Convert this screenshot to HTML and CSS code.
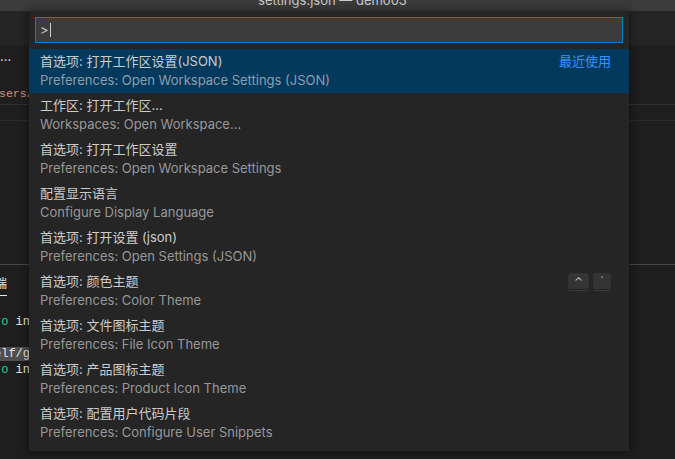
FILE: index.html
```html
<!DOCTYPE html>
<html lang="zh">
<head>
<meta charset="utf-8">
<title>settings.json — demo03</title>
<link rel="stylesheet" href="styles.css">
</head>
<body>
<div class="window">
  <div class="titlebar"><span class="title">settings.json — demo03</span></div>
  <div class="tabs"></div>
  <div class="editor">
    <div class="crumbs">…</div>
    <div class="code"><span class="str">sers/demo03/settings.json"</span></div>
    <div class="sep"></div>
    <div class="sep2"></div>
  </div>
  <div class="panel">
    <div class="ptabs"><span class="ptab">终端</span></div>
    <div class="term">
      <div class="tline"><span class="green">ro</span> install</div>
      <div class="tline"></div>
      <div class="tline"><span class="sel">elf/git</span></div>
      <div class="tline"><span class="green">ro</span> install</div>
    </div>
  </div>

  <div class="quick">
    <div class="input"><span class="prompt">&gt;</span><span class="caret"></span></div>
    <div class="list">
      <div class="row selected">
        <div class="line1"><span class="label">首选项: 打开工作区设置(JSON)</span><span class="recent">最近使用</span></div>
        <div class="detail">Preferences: Open Workspace Settings (JSON)</div>
      </div>
      <div class="row">
        <div class="line1"><span class="label">工作区: 打开工作区...</span></div>
        <div class="detail">Workspaces: Open Workspace...</div>
      </div>
      <div class="row">
        <div class="line1"><span class="label">首选项: 打开工作区设置</span></div>
        <div class="detail">Preferences: Open Workspace Settings</div>
      </div>
      <div class="row">
        <div class="line1"><span class="label">配置显示语言</span></div>
        <div class="detail">Configure Display Language</div>
      </div>
      <div class="row">
        <div class="line1"><span class="label">首选项: 打开设置 (json)</span></div>
        <div class="detail">Preferences: Open Settings (JSON)</div>
      </div>
      <div class="row">
        <div class="line1"><span class="label">首选项: 颜色主题</span><span class="keys"><span class="key k1">⌃</span><span class="key k2">`</span></span></div>
        <div class="detail">Preferences: Color Theme</div>
      </div>
      <div class="row">
        <div class="line1"><span class="label">首选项: 文件图标主题</span></div>
        <div class="detail">Preferences: File Icon Theme</div>
      </div>
      <div class="row">
        <div class="line1"><span class="label">首选项: 产品图标主题</span></div>
        <div class="detail">Preferences: Product Icon Theme</div>
      </div>
      <div class="row">
        <div class="line1"><span class="label">首选项: 配置用户代码片段</span></div>
        <div class="detail">Preferences: Configure User Snippets</div>
      </div>
    </div>
  </div>
</div>
</body>
</html>
```

FILE: styles.css
```css
* { box-sizing: border-box; }
html, body {
  margin: 0;
  padding: 0;
  background: #1e1e1e;
  width: 675px;
  height: 459px;
  overflow: hidden;
}
body {
  font-family: Inter, "Noto Sans CJK SC", sans-serif;
  color: #cccccc;
}
.window {
  position: relative;
  width: 675px;
  height: 459px;
  overflow: hidden;
}
.titlebar {
  height: 11px;
  background: #3c3c3c;
  overflow: hidden;
  text-align: center;
  padding-right: 10px;
}
.title {
  display: block;
  margin-top: -11px;
  line-height: 22px;
  font-size: 13px;
  color: #cccccc;
}
.tabs {
  height: 34px;
  background: #252526;
}
.editor {
  height: 219px;
  background: #1e1e1e;
}
.crumbs {
  height: 22px;
  line-height: 22px;
  font-size: 13px;
  color: #cccccc;
}
.code {
  margin-top: 18px;
  height: 18px;
  line-height: 18px;
  font-family: "Liberation Mono", monospace;
  font-size: 11.5px;
  white-space: nowrap;
  margin-left: -1px;
}
.str { color: #ce9178; }
.sep {
  height: 1px;
  background: #303030;
  margin-top: 1px;
}
.sep2 {
  height: 1px;
  background: #2b2b2b;
  margin-top: 15px;
}
.panel {
  border-top: 1px solid #474747;
  height: 195px;
  background: #1e1e1e;
}
.ptabs {
  height: 31px;
  white-space: nowrap;
}
.ptab {
  display: inline-block;
  margin-top: 8px;
  margin-left: -17px;
  line-height: 22px;
  font-size: 12px;
  color: #e7e7e7;
  border-bottom: 1px solid #e7e7e7;
}
.term {
  padding-top: 18px;
  font-family: "Liberation Mono", monospace;
  font-size: 12px;
  color: #e5e5e5;
  white-space: nowrap;
  margin-left: -6px;
}
.tline {
  height: 16px;
  line-height: 16px;
}
.green { color: #23d18b; }
.sel {
  background: #4f4f4f;
  margin-left: -2px;
  padding-left: 2px;
}

/* quick pick */
.quick {
  position: absolute;
  left: 29px;
  top: 11px;
  width: 600px;
  background: #252526;
  padding: 6px 0 6px;
  box-shadow: 0 0 8px 2px rgba(0, 0, 0, 0.36);
}
.input {
  margin: 0 6px;
  height: 26px;
  border: 1px solid #007fd4;
  background: #3c3c3c;
  padding-left: 4px;
  display: flex;
  align-items: center;
  font-size: 13px;
  color: #cccccc;
}
.prompt { line-height: 24px; }
.caret {
  display: inline-block;
  width: 1px;
  height: 14px;
  background: #cccccc;
  margin-left: 1px;
}
.list { margin-top: 6px; }
.row {
  height: 44px;
  padding: 3px 18px 0 11px;
  font-size: 13px;
}
.row.selected { background: #04395e; }
.line1 {
  display: flex;
  align-items: center;
  justify-content: space-between;
  height: 18px;
  line-height: 18px;
}
.label { color: #cccccc; }
.detail {
  height: 18px;
  line-height: 18px;
  margin-top: 1px;
  color: rgba(204, 204, 204, 0.7);
}
.recent { color: #3794ff; }
.keys {
  display: flex;
  gap: 4px;
  margin-top: 1px;
}
.key {
  display: flex;
  align-items: center;
  justify-content: center;
  height: 18px;
  border-radius: 3px;
  background: rgba(128, 128, 128, 0.17);
  border: 1px solid rgba(51, 51, 51, 0.6);
  border-bottom-color: rgba(68, 68, 68, 0.6);
  box-shadow: inset 0 -1px 0 rgba(0, 0, 0, 0.36);
  font-size: 11px;
  color: #cccccc;
  line-height: 1;
}
.k1 { width: 21px; }
.k2 { width: 18px; }
```
